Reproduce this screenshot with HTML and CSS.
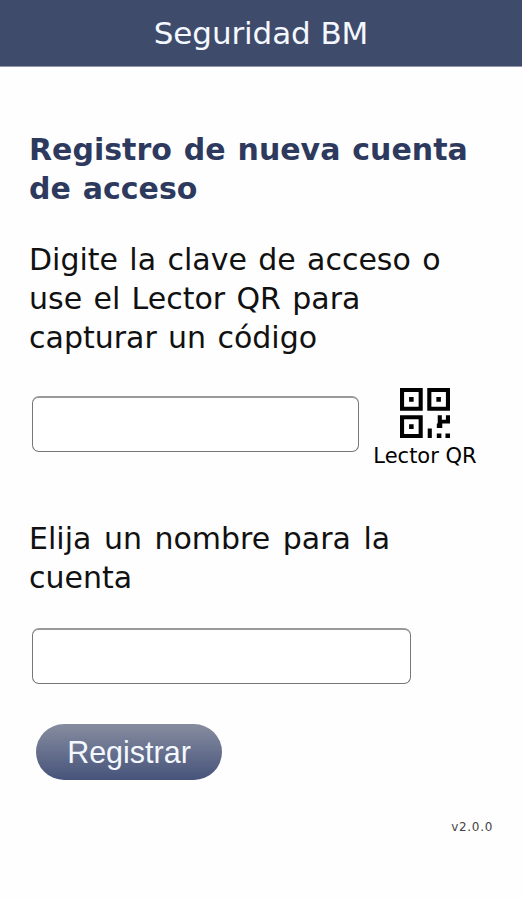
FILE: index.html
```html
<!DOCTYPE html>
<html lang="es">
<head>
    <meta charset="UTF-8">
    <meta name="viewport" content="width=device-width, initial-scale=1.0">
    <title>Seguridad BM</title>
    <link rel="stylesheet" href="styles.css">
</head>
<body>
    <header class="topbar"><span class="topbar-title">Seguridad BM</span></header>

    <main class="content">
        <h1 class="title">Registro de nueva cuenta<br>de acceso</h1>

        <form class="form">
            <label class="label" for="clave">Digite la clave de acceso o<br>use el Lector QR para<br>capturar un código</label>
            <div class="key-row">
                <input class="field field-key" type="text" id="clave">
                <a class="qr" href="#">
                    <svg class="qr-icon" viewBox="0 0 11 11">
                        <path fill-rule="evenodd" d="M0 0h5v5H0zM.9 .9v3.2h3.2V.9zM6 0h5v5H6zM6.9 .9v3.2h3.2V.9zM0 6h5v5H0zM.9 6.9v3.2h3.2V6.9z"/>
                        <path d="M2 2h1v1H2zM8 2h1v1H8zM2 8h1v1H2zM8.3 6h.9v1h.9V6h.9v1.8H9.3v1H8.1v-1h.2zM6.1 8.9H7V11h-.9zM8.1 10h1v1h-1zM10 10h1v1h-1z"/>
                    </svg>
                    <span class="qr-text">Lector QR</span>
                </a>
            </div>

            <label class="label label-name" for="nombre">Elija un nombre para la<br>cuenta</label>
            <input class="field field-name" type="text" id="nombre">

            <button class="submit" type="button">Registrar</button>
        </form>

        <p class="version">v2.0.0</p>
    </main>
</body>
</html>
```
FILE: styles.css
```css
body {
    margin: 0;
    background-color: #fefefe;
    color: #111;
    font-family: Verdana, "DejaVu Sans", sans-serif;
}

.topbar {
    height: 66px;
    line-height: 67px;
    background-color: #3f4b6b;
    border-bottom: 1px solid #9096a5;
    color: #f4f8ff;
    font-size: 31px;
    letter-spacing: -0.1px;
    text-align: center;
}

.content {
    padding: 63px 29px 0 29px;
}

.title {
    margin: 0 0 32px;
    color: #2d3a5e;
    font-size: 30px;
    line-height: 39px;
    word-spacing: 1.5px;
    white-space: nowrap;
}

.label {
    display: block;
    font-size: 30px;
    line-height: 39px;
    word-spacing: 1.8px;
    white-space: nowrap;
}

.label-name {
    word-spacing: 3px;
}

.key-row {
    display: flex;
    align-items: flex-start;
    margin: 31px 0 50px;
}

.field {
    box-sizing: border-box;
    display: block;
    height: 56px;
    margin: 0 0 0 3px;
    padding: 0 10px;
    background-color: #fff;
    border: 1px solid #777;
    border-top: 2px solid #999;
    border-radius: 7px;
    font-size: 28px;
}

.field-key {
    width: 327px;
    margin-top: 8px;
}

.field-name {
    width: 379px;
    margin-top: 31px;
}

.qr {
    display: flex;
    flex-direction: column;
    align-items: center;
    width: 104px;
    margin-left: 14px;
    color: #000;
    text-decoration: none;
}

.qr-icon {
    width: 50px;
    height: 50px;
}

.qr-text {
    margin-top: 6px;
    font-size: 21px;
    line-height: 25px;
    white-space: nowrap;
}

.submit {
    display: block;
    width: 186px;
    height: 56px;
    margin: 40px 0 0 7px;
    padding: 1px 0 0;
    border: none;
    border-radius: 28px;
    background: linear-gradient(#878da0, #46537a);
    color: #f4f8ff;
    font-family: "Liberation Sans", Arial, sans-serif;
    font-size: 30.5px;
    cursor: pointer;
}

.version {
    margin: 39px 0 0;
    color: #444;
    font-size: 12px;
    line-height: 16px;
    letter-spacing: 0.7px;
    text-align: right;
}
```
